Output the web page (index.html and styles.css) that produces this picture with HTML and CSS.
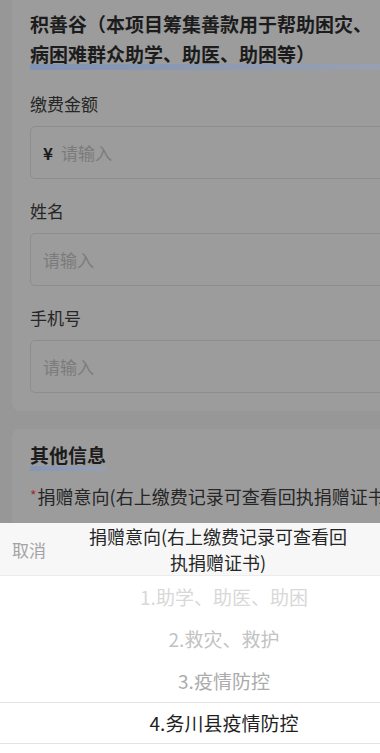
FILE: index.html
```html
<!DOCTYPE html>
<html lang="zh-CN">
<head>
  <meta charset="UTF-8">
  <meta name="viewport" content="width=device-width, initial-scale=1.0">
  <title>捐赠</title>
  <link rel="stylesheet" href="styles.css">
</head>
<body>
  <!-- 表单（被遮罩盖住） -->
  <div class="page">
    <div class="card card-top">
      <div class="project-title">积善谷（本项目筹集善款用于帮助困灾、病困难群众助学、助医、助困等）</div>

      <div class="field-label">缴费金额</div>
      <div class="field-input"><span class="yen">¥</span><span class="ph">请输入</span></div>

      <div class="field-label">姓名</div>
      <div class="field-input"><span class="ph">请输入</span></div>

      <div class="field-label">手机号</div>
      <div class="field-input"><span class="ph">请输入</span></div>
    </div>

    <div class="card card-other">
      <div class="section-title"><span>其他信息</span></div>
      <div class="field-label req"><i>*</i>捐赠意向(右上缴费记录可查看回执捐赠证书)</div>
    </div>
  </div>

  <!-- 底部选择器 -->
  <div class="picker">
    <div class="picker-head">
      <div class="picker-cancel">取消</div>
      <div class="picker-title">捐赠意向(右上缴费记录可查看回执捐赠证书)</div>
      <div class="picker-side"></div>
    </div>
    <div class="picker-list">
      <div class="picker-item far">1.助学、助医、助困</div>
      <div class="picker-item mid">2.救灾、救护</div>
      <div class="picker-item near">3.疫情防控</div>
      <div class="picker-item active">4.务川县疫情防控</div>
    </div>
  </div>
</body>
</html>
```

FILE: styles.css
```css
html, body {
  margin: 0;
  padding: 0;
}

body {
  width: 380px;
  height: 753px;
  overflow: hidden;
  position: relative;
  background-color: #979797; /* 遮罩下的页面底色 */
  font-family: "Noto Sans CJK SC", "Noto Sans", sans-serif;
  color: #262626;
}

.page {
  width: 400px;
  margin-top: -12px;
}

.card {
  margin-left: 12px;
  background-color: #9c9c9c;
  border-radius: 8px;
  padding: 0 0 0 18px;
}

.card-top {
  padding-top: 21px;
  padding-bottom: 18px;
}

.card-other {
  margin-top: 18px;
  padding-top: 12px;
  padding-bottom: 20px;
}

/* 项目标题 + 蓝色下划底 */
.project-title {
  width: 352px;
  font-size: 19px;
  font-weight: bold;
  line-height: 30px;
  padding-bottom: 1px;
  color: #1c1c1c;
  background: linear-gradient(to right, #8193b4, #97a0b0) left bottom / 100% 6px no-repeat;
}

.field-label {
  font-size: 17px;
  line-height: 24px;
  margin-top: 22px;
  color: #262626;
}

.card-top .field-label + .field-input {
  margin-top: 10px;
}

.field-input {
  height: 51px;
  border: 1px solid #8d8d8d;
  border-radius: 5px;
  display: flex;
  align-items: center;
  padding-left: 12px;
  font-size: 17px;
}

.field-input + .field-label {
  margin-top: 20px;
}

.yen {
  color: #1c1c1c;
  font-weight: bold;
  font-size: 17px;
  margin-right: 8px;
}

.ph {
  color: #7b7b7b;
}

.section-title {
  font-size: 19px;
  font-weight: bold;
  line-height: 28px;
}

.section-title span {
  display: inline-block;
  padding-bottom: 2px;
  background: linear-gradient(to right, #8497b8, #97a0b0) left bottom / 100% 5px no-repeat;
  color: #1c1c1c;
}

.req {
  margin-top: 12px;
  font-size: 18px;
  white-space: nowrap;
}

.req i {
  font-style: normal;
  color: #a1322a;
  font-size: 14px;
  vertical-align: 3px;
  margin-right: 1px;
}

/* 底部弹出的选择器 */
.picker {
  position: absolute;
  left: 0;
  right: 0;
  bottom: 0;
  height: 230px;
  background-color: #fff;
}

.picker-head {
  height: 52px;
  background-color: #f7f7f7;
  border-bottom: 1px solid #ececec;
  display: flex;
  align-items: center;
}

.picker-cancel {
  width: 80px;
  padding-left: 12px;
  box-sizing: border-box;
  font-size: 17px;
  color: #a3a3a3;
}

.picker-title {
  width: 276px;
  text-align: center;
  font-size: 18px;
  line-height: 26px;
  color: #262626;
}

.picker-side {
  flex: 1;
}

.picker-item {
  height: 42px;
  line-height: 42px;
  padding-left: 68px;
  text-align: center;
  font-size: 19px;
  box-sizing: border-box;
}

.picker-item.far {
  color: #d8d8d8;
}

.picker-item.mid {
  color: #c2c2c2;
}

.picker-item.near {
  color: #ababab;
}

.picker-item.active {
  color: #1f1f1f;
  border-top: 1px solid #e3e3e3;
  border-bottom: 1px solid #e3e3e3;
  line-height: 40px;
}
```
